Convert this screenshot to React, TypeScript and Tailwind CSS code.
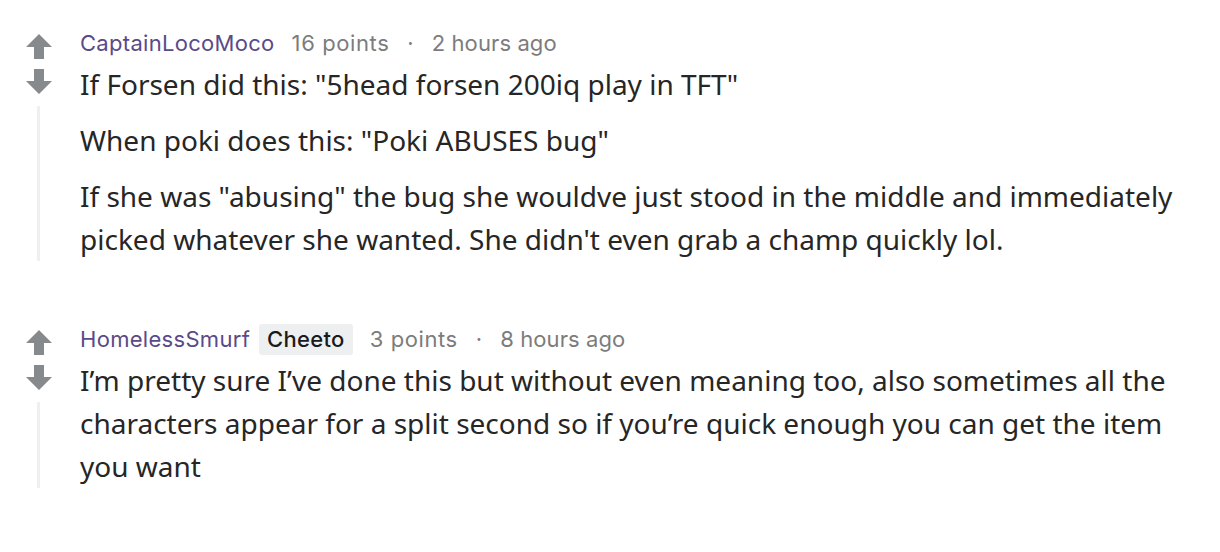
import React from 'react'

type CommentProps = {
  author: string
  flair?: string
  points: string
  time: string
  paragraphs: string[]
}

function Arrow({ down = false }: { down?: boolean }) {
  return (
    <svg
      viewBox="0 0 28 28"
      className={down ? 'w-[28px] h-[28px] rotate-180' : 'w-[28px] h-[28px]'}
      fill="#878a8c"
    >
      <path d="M14 2 L27 15 L19 15 L19 27 L9 27 L9 15 L1 15 Z" />
    </svg>
  )
}

function Comment({ author, flair, points, time, paragraphs }: CommentProps) {
  return (
    <div className="flex">
      {/* votes + thread line */}
      <div className="w-[80px] flex flex-col items-center pr-[3px] pt-[4px]">
        <Arrow />
        <div className="mt-[8px]">
          <Arrow down />
        </div>
        <div className="mt-[10px] w-[3px] flex-1 bg-[#edeff1]" />
      </div>

      <div className="flex-1">
        <div
          className="h-[30px] flex items-center text-[22px] text-[#7c7c7c]"
          style={{ fontFamily: 'Inter, "Noto Sans", sans-serif' }}
        >
          <span className="text-[#5a4a88] tracking-[0.3px]">{author}</span>
          {flair && (
            <span className="ml-[9px] px-[8px] h-[31px] flex items-center bg-[#edeff1] text-[#1a1a1b] font-medium rounded-[3px] tracking-[0.3px]">
              {flair}
            </span>
          )}
          <span className="ml-[17px] tracking-[0.6px]">{points}</span>
          <span className="mx-[18px]">·</span>
          <span className="tracking-[0.1px]">{time}</span>
        </div>
        <div
          className="mt-[5px] text-[28px] leading-[43px] text-[#262626] pr-[30px] flex flex-col gap-[13px]"
          style={{ fontFamily: '"Noto Sans", "Open Sans", sans-serif' }}
        >
          {paragraphs.map((p, i) => (
            <p key={i}>{p}</p>
          ))}
        </div>
      </div>
    </div>
  )
}

export default function App() {
  return (
    <div className="w-[1220px] h-[552px] bg-white pt-[28px] flex flex-col gap-[63px] overflow-hidden">
      <Comment
        author="CaptainLocoMoco"
        points="16 points"
        time="2 hours ago"
        paragraphs={[
          'If Forsen did this: "5head forsen 200iq play in TFT"',
          'When poki does this: "Poki ABUSES bug"',
          'If she was "abusing" the bug she wouldve just stood in the middle and immediately picked whatever she wanted. She didn\'t even grab a champ quickly lol.',
        ]}
      />
      <Comment
        author="HomelessSmurf"
        flair="Cheeto"
        points="3 points"
        time="8 hours ago"
        paragraphs={[
          'I\u2019m pretty sure I\u2019ve done this but without even meaning too, also sometimes all the characters appear for a split second so if you\u2019re quick enough you can get the item you want',
        ]}
      />
    </div>
  )
}
